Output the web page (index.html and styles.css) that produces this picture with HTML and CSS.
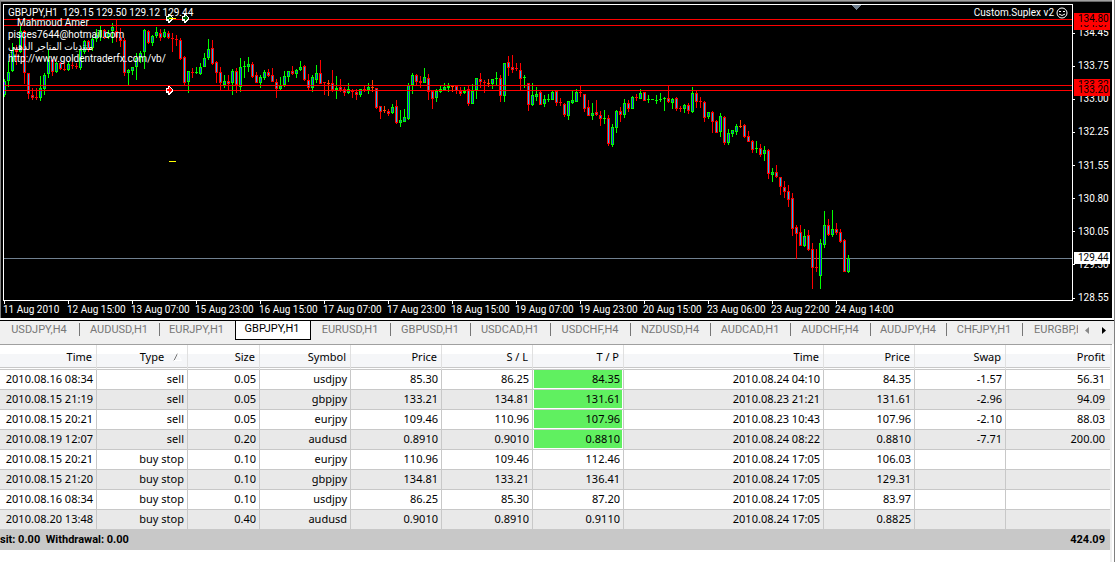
FILE: index.html
```html
<!DOCTYPE html>
<html lang="en">
<head>
<meta charset="utf-8">
<title>GBPJPY,H1</title>
<link rel="stylesheet" href="styles.css">
</head>
<body>
<div class="window">
  <section class="chart" aria-label="GBPJPY,H1 chart">
    <div class="chart-main">
      <div class="plot">
        <svg class="canvas" shape-rendering="crispEdges" aria-hidden="true">
          <rect class="bid" x="0" y="253" width="100%" height="1"/>
          <g id="candles" transform="translate(-4 -5)"></g>
          <rect class="level" x="0" y="14" width="100%" height="1"/>
          <rect class="level" x="0" y="20" width="100%" height="1"/>
          <rect class="level" x="0" y="80" width="100%" height="1"/>
          <rect class="level" x="0" y="85" width="100%" height="1"/>
          <g transform="translate(-4 -5)">
            <path fill="#708090" d="M852 5h9v1h-1v1h-1v1h-1v1h-1v1h-1v-1h-1v-1h-1v-1h-1v-1h-1z"/>
            <g><path fill="#fff" d="M166 16h2v-2h2v1h1v1h1v1h1v3h-1v1h-1v1h-1v1h-2v-2h-2z"/><path fill="#006400" d="M167 17h2v-2h1v1h1v1h1v2h-1v1h-1v1h-1v-2h-2z"/></g>
            <g transform="translate(16 0)"><path fill="#fff" d="M166 16h2v-2h2v1h1v1h1v1h1v3h-1v1h-1v1h-1v1h-2v-2h-2z"/><path fill="#006400" d="M167 17h2v-2h1v1h1v1h1v2h-1v1h-1v1h-1v-2h-2z"/></g>
            <g transform="translate(0 72)"><path fill="#fff" d="M166 16h2v-2h2v1h1v1h1v1h1v3h-1v1h-1v1h-1v1h-2v-2h-2z"/><path fill="#f00" d="M167 17h2v-2h1v1h1v1h1v2h-1v1h-1v1h-1v-2h-2z"/></g>
            <path fill="#ff0" d="M169 18h7v1h-7zM169 161h7v1h-7z"/>
          </g>
        </svg>
        <div class="notes">
          <p class="owner">Mahmoud Amer</p>
          <p>pisces7644@hotmail.com</p>
          <p lang="ar">منتديات المتاجر الذهبي</p>
          <p>http://www.goldentraderfx.com/vb/</p>
        </div>
        <header class="caption">
          <h1>GBPJPY,H1&nbsp; 129.15 129.50 129.12 129.44</h1>
          <span class="expert">Custom.Suplex v2
            <svg width="12" height="12" viewBox="0 0 12 12" aria-hidden="true"><circle cx="6" cy="6" r="5" fill="none" stroke="#fff"/><path d="M3 4.500h2M7 4.500h2M3 7q3 3 6 0" fill="none" stroke="#fff"/></svg>
          </span>
        </header>
      </div>
      <div class="prices">
        <span>134.45</span><span>133.75</span><span>133.00</span><span>132.25</span><span>131.55</span><span>130.80</span><span>130.05</span><span>129.30</span><span>128.55</span>
        <b class="tag t-13467">134.67</b>
        <b class="tag t-13480">134.80</b>
        <b class="tag t-13332">133.32</b>
        <b class="tag t-13320">133.20</b>
        <b class="tag now">129.44</b>
      </div>
    </div>
    <div class="dates">
      <span>11 Aug 2010</span><span>12 Aug 15:00</span><span>13 Aug 07:00</span><span>15 Aug 23:00</span><span>16 Aug 15:00</span><span>17 Aug 07:00</span><span>17 Aug 23:00</span><span>18 Aug 15:00</span><span>19 Aug 07:00</span><span>19 Aug 23:00</span><span>20 Aug 15:00</span><span>23 Aug 06:00</span><span>23 Aug 22:00</span><span>24 Aug 14:00</span>
    </div>
  </section>

  <nav class="tabbar" aria-label="Charts">
    <div class="tabs">
      <button class="tab">USDJPY,H4</button>
      <button class="tab">AUDUSD,H1</button>
      <button class="tab narrow last-before">EURJPY,H1</button>
      <button class="tab narrow active">GBPJPY,H1</button>
      <button class="tab">EURUSD,H1</button>
      <button class="tab">GBPUSD,H1</button>
      <button class="tab">USDCAD,H1</button>
      <button class="tab">USDCHF,H4</button>
      <button class="tab">NZDUSD,H4</button>
      <button class="tab">AUDCAD,H1</button>
      <button class="tab">AUDCHF,H4</button>
      <button class="tab narrow">AUDJPY,H4</button>
      <button class="tab narrow">CHFJPY,H1</button>
      <button class="tab">EURGBP,H1</button>
    </div>
    <button class="scroll" aria-label="Scroll left"><svg width="4" height="7" viewBox="0 0 4 7"><path d="M4 0v7L0 3.500z" fill="#888"/></svg></button>
    <button class="scroll" aria-label="Scroll right"><svg width="4" height="7" viewBox="0 0 4 7"><path d="M0 0v7L4 3.500z" fill="#000"/></svg></button>
  </nav>

  <main class="terminal">
    <table>
      <colgroup><col class="c-first"><col class="c-mid"><col class="c-size"><col class="c-mid"><col class="c-mid"><col class="c-mid"><col class="c-mid"><col><col class="c-mid"><col class="c-mid"><col class="c-profit"></colgroup>
      <thead>
        <tr><th>Time</th><th>Type <svg width="10" height="8" viewBox="0 0 10 8" aria-hidden="true"><path d="M1 7.500L4.500 .5" stroke="#777" fill="none"/><path d="M4.500 .5L8.500 7.500H1" stroke="#fff" fill="none"/></svg></th><th>Size</th><th>Symbol</th><th>Price</th><th>S / L</th><th>T / P</th><th>Time</th><th>Price</th><th>Swap</th><th>Profit</th></tr>
      </thead>
      <tbody>
        <tr><td>2010.08.16 08:34</td><td>sell</td><td>0.05</td><td>usdjpy</td><td>85.30</td><td>86.25</td><td class="hit">84.35</td><td>2010.08.24 04:10</td><td>84.35</td><td>-1.57</td><td>56.31</td></tr>
        <tr><td>2010.08.15 21:19</td><td>sell</td><td>0.05</td><td>gbpjpy</td><td>133.21</td><td>134.81</td><td class="hit">131.61</td><td>2010.08.23 21:21</td><td>131.61</td><td>-2.96</td><td>94.09</td></tr>
        <tr><td>2010.08.15 20:21</td><td>sell</td><td>0.05</td><td>eurjpy</td><td>109.46</td><td>110.96</td><td class="hit">107.96</td><td>2010.08.23 10:43</td><td>107.96</td><td>-2.10</td><td>88.03</td></tr>
        <tr><td>2010.08.19 12:07</td><td>sell</td><td>0.20</td><td>audusd</td><td>0.8910</td><td>0.9010</td><td class="hit">0.8810</td><td>2010.08.24 08:22</td><td>0.8810</td><td>-7.71</td><td>200.00</td></tr>
        <tr><td>2010.08.15 20:21</td><td>buy stop</td><td>0.10</td><td>eurjpy</td><td>110.96</td><td>109.46</td><td>112.46</td><td>2010.08.24 17:05</td><td>106.03</td><td></td><td></td></tr>
        <tr><td>2010.08.15 21:20</td><td>buy stop</td><td>0.10</td><td>gbpjpy</td><td>134.81</td><td>133.21</td><td>136.41</td><td>2010.08.24 17:05</td><td>129.31</td><td></td><td></td></tr>
        <tr><td>2010.08.16 08:34</td><td>buy stop</td><td>0.10</td><td>usdjpy</td><td>86.25</td><td>85.30</td><td>87.20</td><td>2010.08.24 17:05</td><td>83.97</td><td></td><td></td></tr>
        <tr><td>2010.08.20 13:48</td><td>buy stop</td><td>0.40</td><td>audusd</td><td>0.9010</td><td>0.8910</td><td>0.9110</td><td>2010.08.24 17:05</td><td>0.8825</td><td></td><td></td></tr>
      </tbody>
      <tfoot>
        <tr><td class="summary" colspan="10">sit: 0.00&nbsp; Withdrawal: 0.00</td><td>424.09</td></tr>
      </tfoot>
    </table>
  </main>
</div>
<script src="chart.js"></script>
</body>
</html>
```
FILE: styles.css
```css
* { box-sizing: border-box; }
body {
  margin: 0;
  background: #fff;
  color: #000;
  font: 11px/12px "Noto Sans", "Open Sans", sans-serif;
}
p, h1 { margin: 0; }
button { font: inherit; border: 0; padding: 0; background: none; }

.window {
  min-height: 100vh;
  border-right: 1px solid #808080;
  background: #fff;
  display: flex;
  flex-direction: column;
}

/* chart */
.chart {
  background: #000;
  color: #fff;
  margin-right: 2px;
  border-top: 1px solid #a0a0a0;
  border-left: 1px solid #808080;
  box-shadow: inset 0 1px #696969;
  padding: 3px 0 0 2px;
  font: 10px/12px Roboto, "DejaVu Sans Condensed", sans-serif;
}
.chart-main { display: flex; }
.plot {
  position: relative;
  flex: 1;
  min-width: 0;
  border: 1px solid #fff;
  overflow: hidden;
}
.canvas { display: block; width: 100%; height: 295px; }
.level { fill: #f00; }
.bid { fill: #708090; }
.caption {
  position: absolute;
  top: 2px;
  left: 4px;
  right: 4px;
  display: flex;
  justify-content: space-between;
}
.caption h1 { font: inherit; }
.expert { display: flex; align-items: center; gap: 2px; }
.notes { position: absolute; top: 12px; left: 4px; }
.owner { padding-left: 9px; }

.prices {
  position: relative;
  width: 39px;
  margin-bottom: -3px;
  padding: 23px 0 0;
  display: flex;
  flex-direction: column;
  justify-content: space-between;
}
.prices span { display: flex; align-items: center; gap: 3px; }
.prices span::before { content: ""; width: 2px; height: 1px; background: #fff; }
.tag {
  position: absolute;
  left: 1px;
  right: 2px;
  padding-left: 4px;
  height: 12px;
  font-weight: 400;
  color: #000;
  background: #f00;
}
.t-13480 { top: 9px; }
.t-13467 { top: 14px; }
.t-13332 { top: 75px; }
.t-13320 { top: 80px; }
.now { top: 248px; background: #fff; }

.dates { display: flex; height: 17px; overflow: hidden; }
.dates span { flex: none; width: 64px; white-space: nowrap; padding-top: 3px; background: linear-gradient(#fff, #fff) 1px 0 / 1px 3px no-repeat; }

/* chart tabs */
.tabbar {
  display: flex;
  margin-top: 2px;
  height: 24px;
  border-top: 1px solid #000;
  background: #f0f0f0;
  padding-right: 2px;
}
.tabs { display: flex; flex: 1; min-width: 0; overflow: hidden; height: 19px; }
.tab {
  flex: none;
  width: 80px;
  color: #777;
  font: 11px/12px Roboto, Arial, sans-serif;
  padding: 0 2px 2px 0;
  background: linear-gradient(#777, #777) right 2px / 1px 13px no-repeat;
}
.narrow { width: 76px; }
.last-before { width: 75px; background: none; }
.active { border: 1px solid #000; border-top: 0; background: #fff; color: #000; }
.scroll { width: 17px; height: 18px; display: flex; align-items: center; justify-content: center; }

/* history table */
.terminal { flex: 1; border-top: 1px solid #a0a0a0; margin-right: 2px; padding-right: 2px; box-shadow: inset -2px 0 #f0f0f0; }
table { width: 100%; table-layout: fixed; border-collapse: separate; border-spacing: 0; }
.c-first { width: 97px; }
.c-mid { width: 91px; }
.c-size { width: 72px; }
.c-profit { width: 104px; }
th, td { text-align: right; white-space: nowrap; border-right: 1px solid #c8c8c8; }
th:last-child, td:last-child { border-right: 0; }
th {
  height: 25px;
  padding: 0 4px 0 0;
  font-weight: 400;
  border-right-color: #e0e0e0;
  border-bottom: 1px solid #c8c8c8;
  background: linear-gradient(#c8c8c8, #c8c8c8) 0 22px / 100% 1px no-repeat,
    linear-gradient(#fff 0 9px, #f5f6f8 9px 22px, #fff 22px);
}
th svg { margin-left: 6px; }
td { height: 20px; padding: 0 3px 1px 0; border-bottom: 1px solid #c8c8c8; }
tbody tr:nth-child(even) { background: #e9e9e9; }
tbody .hit { background: #60f060; box-shadow: inset -1px -1px #fff, inset 1px 0 #fff; }
th:last-child, td:last-child { padding-right: 5px; }
tfoot td { background: #c8c8c8; font-family: Roboto, sans-serif; font-weight: 700; border-right: 0; padding-bottom: 0; }
td.summary { text-align: left; padding-left: 0; }
```
FILE: chart.js
```js
// kind, high, body top, body bottom, low; one entry every 4px
const bars = `g79,81,95,97 g61,72,81,87 g43,50,71,72 r45,50,52,65 g26,31,52,53 r30,31,73,84 r73,73,94,99 r88,95,98,100 r88,97,98,100 g76,88,98,101
g73,75,89,95 g50,60,74,78 r59,60,72,76 g62,63,72,73 r62,63,69,70 r63,69,70,71 g62,64,70,71 r62,65,66,69 r63,66,67,69 g49,50,68,70
g40,41,52,54 r40,41,49,52 g36,39,48,51 g29,35,39,42 g26,30,37,41 r29,30,38,39 g30,33,37,39 g23,27,31,43 r20,31,37,42 r28,37,41,47
r38,40,73,76 g69,70,73,85 g67,67,71,75 g53,58,67,80 g51,53,58,63 g29,30,52,69 r30,31,43,44 g35,36,43,46 g27,32,36,38 r29,33,38,41
g29,32,37,38 r31,33,38,39 r33,38,39,52 r35,39,40,46 r38,40,59,60 r56,57,83,85 g71,71,82,93 r68,72,73,78 g67,72,73,74 g63,67,74,75
g53,58,67,67 g39,49,58,60 r40,48,64,65 r61,62,73,83 r67,72,83,90 g75,81,85,88 r75,81,84,90 g69,71,83,95 r68,71,85,93 g58,67,87,92
g61,66,67,78 g57,64,67,72 r62,64,77,78 r72,75,83,83 g75,77,83,88 g70,72,78,80 r69,72,76,77 r68,75,82,82 r79,82,89,98 g77,86,89,90
g71,76,85,87 g71,71,77,82 r66,71,74,75 g69,70,74,78 g61,67,70,71 r65,66,80,81 r74,80,88,90 g75,77,88,92 g65,73,80,83 r60,73,84,84
r82,82,83,95 o80,83,83,96 r70,83,90,92 g76,88,90,99 r79,87,90,92 r87,89,93,96 g83,89,93,94 r89,91,92,98 r89,92,95,100 g89,89,95,97
r86,89,90,92 g83,87,90,94 o80,87,87,92 r88,88,108,109 r106,106,112,119 o106,110,110,113 r109,111,114,116 g104,107,113,114 r100,106,123,124 g110,120,123,127
g109,117,122,122 g83,85,119,120 g73,75,85,94 r74,75,82,85 r76,81,83,88 g68,77,83,83 r74,78,92,100 r91,91,99,109 g89,91,98,102 g86,89,92,93
g83,87,90,90 g83,86,88,92 o86,86,86,92 r86,86,91,94 r87,91,94,96 g87,91,93,94 r86,89,104,106 g84,91,104,104 g78,78,90,99 r73,79,82,88
r80,82,83,93 o79,83,83,87 g79,79,84,89 g72,78,79,86 r75,78,96,102 g63,63,96,102 r56,62,68,76 r55,67,70,73 r63,68,69,71 r63,70,79,90
g75,77,78,88 r83,83,105,111 g83,95,105,106 g87,94,97,101 r90,92,105,105 g95,99,104,107 g94,99,100,102 g91,92,100,100 r91,91,103,106 r98,102,103,106
r103,104,115,117 g101,101,116,120 g91,100,103,104 g89,92,102,102 r86,92,93,97 r94,94,109,112 r100,107,116,116 g103,113,116,120 r100,112,115,116 r111,115,119,126
g110,118,119,124 r115,118,144,146 g124,127,145,147 g110,111,128,133 r107,111,115,122 g99,103,115,118 r100,103,109,112 g96,97,109,109 r94,97,98,101 g89,93,99,99
r92,92,101,101 g95,99,100,103 g99,99,99,99 g95,100,101,104 g93,99,100,102 g97,98,99,111 r86,98,102,103 g98,99,103,109 r97,98,109,111 r106,108,109,112
g104,105,109,113 r103,105,111,114 g87,93,112,113 r90,93,102,108 r97,101,102,108 r101,102,118,122 g112,112,117,119 r111,112,122,133 r120,121,133,133 g113,116,132,137
r116,117,143,145 g129,133,143,145 g130,130,134,137 g124,126,132,135 o120,126,126,128 r124,125,137,138 r131,136,142,142 r140,141,150,153 g141,148,148,153 r144,148,155,157
g146,150,154,161 r149,150,174,179 g168,172,175,182 r165,172,177,178 r177,177,187,195 r181,187,192,198 r185,191,200,207 r193,198,229,236 r225,227,234,259 r225,232,246,246
g229,236,246,247 r230,235,250,251 r243,249,268,289 r249,267,267,272 g239,243,276,289 g211,225,245,248 r219,225,235,236 g210,229,235,237 r223,229,233,235 r229,232,242,243
r239,240,272,272 g255,258,272,273`.split(/\s+/);

const line = { g: "#00ff00", r: "#ff0000", o: "#ff4500" };
const fill = { g: "#1e1eff", r: "#00bfff", o: "#ff4500" };
const group = document.getElementById("candles");

function rect(x, y, width, height, color) {
  const node = document.createElementNS("http://www.w3.org/2000/svg", "rect");
  Object.entries({ x, y, width, height, fill: color }).forEach(([k, v]) => node.setAttribute(k, v));
  group.appendChild(node);
}

bars.forEach((bar, i) => {
  const kind = bar[0];
  const [high, top, bottom, low] = bar.slice(1).split(",").map(Number);
  const x = 4 + i * 4;
  const body = Math.max(1, bottom - top);
  rect(x, high, 1, Math.max(1, low - high), line[kind]);
  rect(x - 1, top, 3, body, line[kind]);
  if (body > 2) rect(x, top + 1, 1, body - 2, fill[kind]);
});
```
